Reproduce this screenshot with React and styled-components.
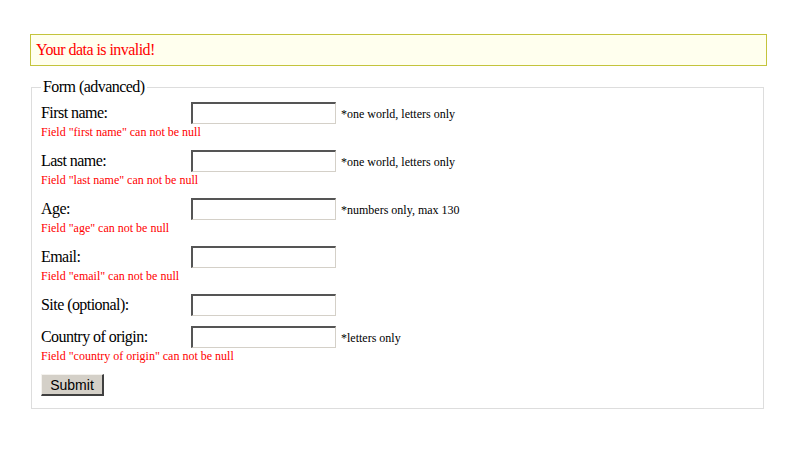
import React from "react";
import styled, { createGlobalStyle } from "styled-components";

const Global = createGlobalStyle`
  html, body { margin: 0; padding: 0; background: #fff; }
  body { font-family: "Liberation Serif", "Times New Roman", serif; color: #000; }
`;

const Page = styled.div`
  padding: 34px 33px 0 30px;
`;

const Alert = styled.div`
  border: 1px solid #c4c43c;
  background: #ffffee;
  color: #ff0000;
  font-size: 16px;
  letter-spacing: -0.55px;
  line-height: 30px;
  padding: 0 5px;
`;

const Fieldset = styled.fieldset`
  margin: 12px 3px 0 1px;
  padding: 6px 9px 12px 9px;
  border: 1px solid #dddddd;
`;

const Legend = styled.legend`
  font-size: 16px;
  letter-spacing: -0.55px;
  line-height: 18px;
  padding: 0 2px;
`;

const Field = styled.div`
  margin-bottom: 10px;
`;

const Row = styled.div`
  display: flex;
  align-items: center;
  height: 22px;
`;

const Label = styled.label`
  width: 150px;
  font-size: 16px;
  letter-spacing: -0.55px;
  flex-shrink: 0;
`;

const Input = styled.input`
  box-sizing: border-box;
  width: 145px;
  height: 22px;
  margin: 0;
  padding: 1px 2px;
  border-style: solid;
  border-width: 2px 1px 1px 2px;
  border-color: #555555 #d4d0c8 #d4d0c8 #555555;
  background: #fff;
  font-size: 13px;
`;

const Hint = styled.span`
  margin-left: 5px;
  font-size: 12px;
  padding-top: 2px;
`;

const Error = styled.div`
  color: #ff0000;
  font-size: 12px;
  line-height: 16px;
`;

const Submit = styled.button`
  box-sizing: border-box;
  width: 63px;
  height: 22px;
  margin: 0;
  padding: 0;
  background: #d4d0c8;
  border-style: solid;
  border-width: 1px 2px 2px 1px;
  border-color: #f4f2ee #404040 #404040 #f4f2ee;
  font-family: "Liberation Sans", Arial, sans-serif;
  font-size: 14px;
  color: #000;
  display: block;
`;

const fields = [
  { label: "First name:", hint: "*one world, letters only", error: 'Field "first name" can not be null' },
  { label: "Last name:", hint: "*one world, letters only", error: 'Field "last name" can not be null' },
  { label: "Age:", hint: "*numbers only, max 130", error: 'Field "age" can not be null' },
  { label: "Email:", error: 'Field "email" can not be null' },
  { label: "Site (optional):" },
  { label: "Country of origin:", hint: "*letters only", error: 'Field "country of origin" can not be null' },
];

export default function App() {
  return (
    <Page>
      <Global />
      <Alert>Your data is invalid!</Alert>
      <Fieldset>
        <Legend>Form (advanced)</Legend>
        {fields.map((f) => (
          <Field key={f.label}>
            <Row>
              <Label>{f.label}</Label>
              <Input type="text" />
              {f.hint && <Hint>{f.hint}</Hint>}
            </Row>
            {f.error && <Error>{f.error}</Error>}
          </Field>
        ))}
        <Submit type="button">Submit</Submit>
      </Fieldset>
    </Page>
  );
}
